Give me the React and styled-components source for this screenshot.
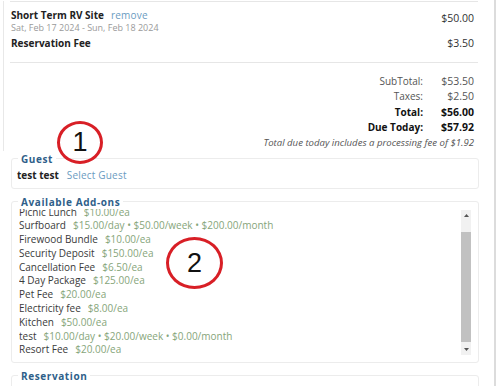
import React from "react";
import styled, { createGlobalStyle } from "styled-components";

const GlobalStyle = createGlobalStyle`
  html, body { margin: 0; padding: 0; background: #fff; }
  body { font-family: "Open Sans", "Liberation Sans", sans-serif; color: #222; }
`;

const Page = styled.div`
  position: relative;
  width: 496px;
  height: 386px;
  overflow: hidden;
  box-sizing: border-box;
  border-right: 2px solid #dcdcdc;
  background: #fff;
`;

const Cart = styled.div`
  margin-left: 3px;
  border-left: 1px solid #e8e8e8;
  padding: 0 16px 0 6px;
`;

const Items = styled.div`
  border-top: 1px solid #e6e6e6;
  border-bottom: 1px solid #e6e6e6;
  margin-top: 1px;
  padding: 7px 4px 12px 1px;
  display: flex;
  flex-direction: column;
  gap: 3px;
`;

const ItemRow = styled.div`
  display: flex;
  justify-content: space-between;
  align-items: flex-start;
`;

const ItemName = styled.div`
  font-size: 10px;
  font-weight: 700;
  line-height: 13px;
  color: #222;
`;

const LinkText = styled.span`
  color: #6a9bbf;
  font-weight: 400;
  margin-left: ${(p) => p.$gap || 7}px;
  letter-spacing: 0.2px;
`;

const DateText = styled.div`
  font-size: 9px;
  line-height: 12px;
  color: #9a9a9a;
`;

const Price = styled.div`
  font-size: 10.5px;
  line-height: 13px;
  color: #333;
  padding-top: ${(p) => p.$offset || 0}px;
`;

const Totals = styled.div`
  display: grid;
  grid-template-columns: 1fr 51px;
  grid-auto-rows: 15.5px;
  padding: 10px 4px 0 0;
  align-items: center;
  text-align: right;
`;

const TLabel = styled.div`
  font-size: 10px;
  line-height: 14px;
  color: ${(p) => (p.$bold ? "#111" : "#555")};
  font-weight: ${(p) => (p.$bold ? 700 : 400)};
`;

const TValue = styled.div`
  font-size: 10.5px;
  line-height: 14px;
  color: ${(p) => (p.$bold ? "#111" : "#555")};
  font-weight: ${(p) => (p.$bold ? 700 : 400)};
`;

const Note = styled.div`
  grid-column: 1 / 3;
  font-style: italic;
  font-size: 9.6px;
  color: #555;
  line-height: 12px;
`;

const Sections = styled.div`
  padding: 2px 15px 0 11px;
  display: flex;
  flex-direction: column;
  gap: 7px;
`;

const Fieldset = styled.fieldset`
  margin: 0;
  border: 1px solid #ececec;
  border-radius: 3px;
  padding: 0 5px ${(p) => p.$bottom || 6}px;
`;

const Legend = styled.legend`
  font-size: 10px;
  font-weight: 700;
  color: #2f5f8a;
  letter-spacing: 0.6px;
  padding: 0 3px;
  margin-left: 1px;
  line-height: 12px;
`;

const GuestLine = styled.div`
  margin-top: 3px;
  font-size: 10px;
  line-height: 14px;
  font-weight: 700;
  color: #222;
`;

const ListWrap = styled.div`
  display: flex;
  gap: 8px;
  height: 146px;
  margin: 1px 2px 0 2px;
`;

const ListViewport = styled.div`
  flex: 1;
  overflow: hidden;
`;

const List = styled.div`
  margin-top: -3px;
  display: flex;
  flex-direction: column;
`;

const AddOn = styled.div`
  font-size: 10px;
  line-height: 13.8px;
  color: #3a3a3a;
  white-space: nowrap;
`;

const AddOnPrice = styled.span`
  color: #86a57a;
  margin-left: 7px;
`;

const Scrollbar = styled.div`
  width: 10px;
  margin: 1px 0 0 0;
  background: #f1f1f1;
  display: flex;
  flex-direction: column;
  align-items: center;
`;

const Arrow = styled.div`
  height: 11px;
  display: flex;
  align-items: center;
  justify-content: center;
`;

const Thumb = styled.div`
  width: 100%;
  flex: 1;
  background: #c1c1c1;
  margin: 11px 0 2px;
`;

const Spacer = styled.div`
  height: 20px;
`;

const Badge = styled.div`
  position: absolute;
  left: ${(p) => p.$x}px;
  top: ${(p) => p.$y}px;
  width: ${(p) => p.$w}px;
  height: ${(p) => p.$h}px;
  border: 3px solid #d81f26;
  border-radius: 50%;
  box-sizing: border-box;
  display: flex;
  align-items: center;
  justify-content: center;
  font-family: "Liberation Sans", Arial, sans-serif;
  font-size: 27px;
  color: #111;
`;

const addons = [
  ["Picnic Lunch", "$10.00/ea"],
  ["Surfboard", "$15.00/day • $50.00/week • $200.00/month"],
  ["Firewood Bundle", "$10.00/ea"],
  ["Security Deposit", "$150.00/ea"],
  ["Cancellation Fee", "$6.50/ea"],
  ["4 Day Package", "$125.00/ea"],
  ["Pet Fee", "$20.00/ea"],
  ["Electricity fee", "$8.00/ea"],
  ["Kitchen", "$50.00/ea"],
  ["test", "$10.00/day • $20.00/week • $0.00/month"],
  ["Resort Fee", "$20.00/ea"],
];

export default function App() {
  return (
    <>
      <GlobalStyle />
      <Page>
        <Cart>
          <Items>
            <ItemRow>
              <div>
                <ItemName>
                  Short Term RV Site<LinkText>remove</LinkText>
                </ItemName>
                <DateText>Sat, Feb 17 2024 - Sun, Feb 18 2024</DateText>
              </div>
              <Price $offset={3}>$50.00</Price>
            </ItemRow>
            <ItemRow>
              <ItemName>Reservation Fee</ItemName>
              <Price>$3.50</Price>
            </ItemRow>
          </Items>
          <Totals>
            <TLabel>SubTotal:</TLabel>
            <TValue>$53.50</TValue>
            <TLabel>Taxes:</TLabel>
            <TValue>$2.50</TValue>
            <TLabel $bold>Total:</TLabel>
            <TValue $bold>$56.00</TValue>
            <TLabel $bold>Due Today:</TLabel>
            <TValue $bold>$57.92</TValue>
            <Note>Total due today includes a processing fee of $1.92</Note>
          </Totals>
        </Cart>
        <Sections>
          <Fieldset>
            <Legend>Guest</Legend>
            <GuestLine>
              test test<LinkText $gap={8}>Select Guest</LinkText>
            </GuestLine>
          </Fieldset>
          <Fieldset $bottom={7}>
            <Legend>Available Add-ons</Legend>
            <ListWrap>
              <ListViewport>
                <List>
                  {addons.map(([n, p]) => (
                    <AddOn key={n}>
                      {n}
                      <AddOnPrice>{p}</AddOnPrice>
                    </AddOn>
                  ))}
                </List>
              </ListViewport>
              <Scrollbar>
                <Arrow>
                  <svg width="5" height="3" viewBox="0 0 5 3"><path d="M0 3 L2.5 0 L5 3 Z" fill="#555" /></svg>
                </Arrow>
                <Thumb />
                <Arrow>
                  <svg width="5" height="3" viewBox="0 0 5 3"><path d="M0 0 L2.5 3 L5 0 Z" fill="#555" /></svg>
                </Arrow>
              </Scrollbar>
            </ListWrap>
          </Fieldset>
          <Fieldset>
            <Legend>Reservation</Legend>
            <Spacer />
          </Fieldset>
        </Sections>
        <Badge $x={57} $y={121} $w={46} $h={43}>1</Badge>
        <Badge $x={166} $y={237} $w={57} $h={52}>2</Badge>
      </Page>
    </>
  );
}
